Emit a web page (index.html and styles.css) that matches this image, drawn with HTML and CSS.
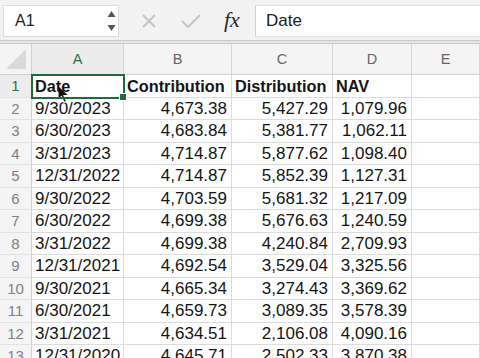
FILE: index.html
```html
<!DOCTYPE html>
<html>
<head>
<meta charset="utf-8">
<link rel="stylesheet" href="styles.css">
</head>
<body>
<div class="fbar">
  <div class="namebox">
    <span class="ref">A1</span>
    <span class="spin">
      <svg width="9" height="22" viewBox="0 0 9 22"><path d="M4.5 1 L8.5 7 L0.5 7 Z" fill="#555"/><path d="M0.5 15 L8.5 15 L4.5 21 Z" fill="#555"/></svg>
    </span>
  </div>
  <div class="btns">
    <svg class="ico" width="16" height="16" viewBox="0 0 16 16"><path d="M2 2 L14 14 M14 2 L2 14" stroke="#c4c4c4" stroke-width="2" fill="none"/></svg>
    <svg class="ico" width="20" height="16" viewBox="0 0 20 16"><path d="M1 8 L7 14 L19 2" stroke="#c4c4c4" stroke-width="2" fill="none"/></svg>
    <span class="fx">fx</span>
  </div>
  <div class="formula">Date</div>
</div>
<div class="rule"></div>
<div class="sheet">
  <div class="corner"><svg width="22" height="22" viewBox="0 0 22 22"><path d="M21 1 L21 21 L1 21 Z" fill="#d9d9d9"/></svg></div>
  <div class="ch sel">A</div><div class="ch">B</div><div class="ch">C</div><div class="ch">D</div><div class="ch">E</div>

  <div class="rh sel">1</div><div class="c b a1">Date</div><div class="c b">Contribution</div><div class="c b">Distribution</div><div class="c b">NAV</div><div class="c"></div>
  <div class="rh">2</div><div class="c">9/30/2023</div><div class="c n">4,673.38</div><div class="c n">5,427.29</div><div class="c n">1,079.96</div><div class="c"></div>
  <div class="rh">3</div><div class="c">6/30/2023</div><div class="c n">4,683.84</div><div class="c n">5,381.77</div><div class="c n">1,062.11</div><div class="c"></div>
  <div class="rh">4</div><div class="c">3/31/2023</div><div class="c n">4,714.87</div><div class="c n">5,877.62</div><div class="c n">1,098.40</div><div class="c"></div>
  <div class="rh">5</div><div class="c">12/31/2022</div><div class="c n">4,714.87</div><div class="c n">5,852.39</div><div class="c n">1,127.31</div><div class="c"></div>
  <div class="rh">6</div><div class="c">9/30/2022</div><div class="c n">4,703.59</div><div class="c n">5,681.32</div><div class="c n">1,217.09</div><div class="c"></div>
  <div class="rh">7</div><div class="c">6/30/2022</div><div class="c n">4,699.38</div><div class="c n">5,676.63</div><div class="c n">1,240.59</div><div class="c"></div>
  <div class="rh">8</div><div class="c">3/31/2022</div><div class="c n">4,699.38</div><div class="c n">4,240.84</div><div class="c n">2,709.93</div><div class="c"></div>
  <div class="rh">9</div><div class="c">12/31/2021</div><div class="c n">4,692.54</div><div class="c n">3,529.04</div><div class="c n">3,325.56</div><div class="c"></div>
  <div class="rh">10</div><div class="c">9/30/2021</div><div class="c n">4,665.34</div><div class="c n">3,274.43</div><div class="c n">3,369.62</div><div class="c"></div>
  <div class="rh">11</div><div class="c">6/30/2021</div><div class="c n">4,659.73</div><div class="c n">3,089.35</div><div class="c n">3,578.39</div><div class="c"></div>
  <div class="rh">12</div><div class="c">3/31/2021</div><div class="c n">4,634.51</div><div class="c n">2,106.08</div><div class="c n">4,090.16</div><div class="c"></div>
  <div class="rh">13</div><div class="c">12/31/2020</div><div class="c n">4,645.71</div><div class="c n">2,502.33</div><div class="c n">3,870.38</div><div class="c"></div>
</div>
<svg class="cursor" width="14" height="20" viewBox="0 0 14 20"><path d="M1 1 L1 16 L4.5 12.5 L7 18.5 L9.5 17.5 L7 11.5 L12 11.5 Z" fill="#111" stroke="#fff" stroke-width="1.2"/></svg>
</body>
</html>
```
FILE: styles.css
```css
html, body {
  margin: 0;
  padding: 0;
}
body {
  width: 480px;
  height: 358px;
  overflow: hidden;
  background: #f2f2f2;
  font-family: "Liberation Sans", Arial, sans-serif;
  position: relative;
}
.fbar {
  display: flex;
  align-items: stretch;
  height: 32px;
  padding: 5px 0 3px 3px;
}
.namebox {
  width: 116px;
  box-sizing: border-box;
  background: #fff;
  border: 1px solid #dcdcdc;
  display: flex;
  align-items: center;
  justify-content: space-between;
  padding: 0 2px 0 11px;
}
.ref {
  font-size: 16px;
  color: #222;
}
.spin {
  display: flex;
  align-items: center;
}
.btns {
  width: 136px;
  display: flex;
  align-items: center;
  padding-left: 22px;
  box-sizing: border-box;
}
.btns .ico:nth-child(1) {
  margin-right: 24px;
}
.btns .ico:nth-child(2) {
  margin-right: 23px;
}
.fx {
  font-family: "Liberation Serif", "Times New Roman", serif;
  font-style: italic;
  font-size: 22px;
  color: #2a2a2a;
  position: relative;
  top: -1px;
}
.formula {
  flex: 1;
  background: #fff;
  border-left: 1px solid #cfcfcf;
  border-top: 1px solid #e4e4e4;
  border-bottom: 1px solid #e4e4e4;
  font-size: 17px;
  color: #1a1a1a;
  display: flex;
  align-items: center;
  padding-left: 10px;
}
.rule {
  height: 2px;
  border-top: 1px solid #c9c9c9;
  border-bottom: 1px solid #c9c9c9;
  background: #e6e6e6;
}
.sheet {
  display: grid;
  grid-template-columns: 32px 92px 108px 101px 79px 68px;
  grid-template-rows: 31px repeat(13, 22.5px);
  background: #fff;
}
.corner {
  background: #f4f4f4;
  border-right: 1px solid #d0d0d0;
  border-bottom: 1px solid #d0d0d0;
  display: flex;
  align-items: flex-end;
  justify-content: flex-end;
  padding: 0 4px 4px 0;
  box-sizing: border-box;
}
.ch {
  background: #f4f4f4;
  border-right: 1px solid #d6d6d6;
  border-bottom: 1px solid #d0d0d0;
  box-sizing: border-box;
  display: flex;
  align-items: center;
  justify-content: center;
  font-size: 14.5px;
  color: #666;
}
.ch.sel {
  color: #2b6e45;
  background: #ececec;
}
.rh {
  background: #f4f4f4;
  border-right: 1px solid #d0d0d0;
  border-bottom: 1px solid #e2e2e2;
  box-sizing: border-box;
  display: flex;
  align-items: center;
  justify-content: center;
  font-size: 15px;
  color: #808080;
}
.rh.sel {
  color: #2b6e45;
  background: #ececec;
}
.c {
  border-right: 1px solid #dcdcdc;
  border-bottom: 1px solid #dcdcdc;
  box-sizing: border-box;
  font-size: 17px;
  color: #151515;
  display: flex;
  align-items: center;
  padding: 1px 3px 0;
  white-space: nowrap;
}
.c.n {
  justify-content: flex-end;
  padding-right: 4px;
}
.c.b {
  font-weight: bold;
  font-size: 16.3px;
}
.a1 {
  position: relative;
  outline: 2px solid #1f6b3c;
  outline-offset: -1px;
  z-index: 1;
}
.a1::after {
  content: "";
  position: absolute;
  right: -4px;
  bottom: -4px;
  width: 6px;
  height: 6px;
  background: #1f6b3c;
  border: 1px solid #fff;
}
.cursor {
  position: absolute;
  left: 57px;
  top: 84px;
}
```
